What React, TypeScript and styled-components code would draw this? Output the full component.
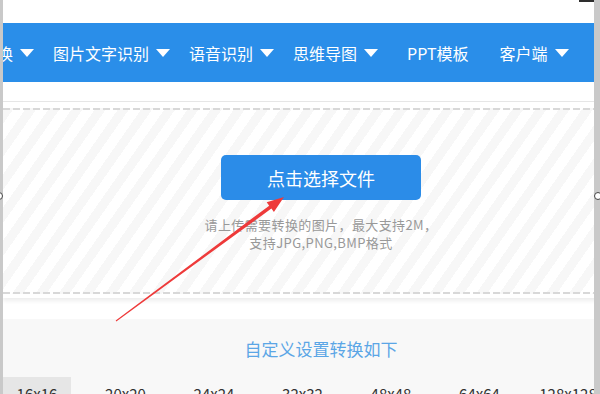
import React from "react";
import styled, { createGlobalStyle } from "styled-components";

const Global = createGlobalStyle`
  html, body { margin: 0; padding: 0; background: #fff; }
  body { width: 600px; height: 394px; overflow: hidden; font-family: "Noto Sans CJK SC", "Noto Sans", sans-serif; }
`;

const Frame = styled.div`
  position: relative;
  display: flex;
  width: 600px;
  height: 394px;
  overflow: hidden;
  background: #fff;
`;

const Strip = styled.div<{ $w: number }>`
  position: relative;
  flex: 0 0 ${(p) => p.$w}px;
  background: #c9c9c9;
`;

const Handle = styled.span<{ $left: number }>`
  position: absolute;
  top: 192px;
  left: ${(p) => p.$left}px;
  width: 6px;
  height: 6px;
  border: 1px solid #444;
  border-radius: 50%;
  background: #fff;
`;

const Main = styled.div`
  flex: 1;
  min-width: 0;
  display: flex;
  flex-direction: column;
  overflow: hidden;
`;

const TopBar = styled.div`
  height: 23px;
  flex: 0 0 23px;
  display: flex;
  justify-content: flex-end;
`;

const TopMark = styled.div`
  width: 15px;
  height: 2px;
  background: #2e2e2e;
`;

const Nav = styled.nav`
  flex: 0 0 59px;
  display: flex;
  align-items: center;
  gap: 19px;
  background: #2a8ee9;
  color: #fff;
  font-size: 16px;
  white-space: nowrap;
  overflow: hidden;
`;

const NavItem = styled.div<{ $shift?: number; $padL?: number; $padR?: number }>`
  display: flex;
  align-items: center;
  gap: 7px;
  flex-shrink: 0;
  margin-left: ${(p) => p.$shift ?? 0}px;
  padding-left: ${(p) => p.$padL ?? 0}px;
  padding-right: ${(p) => p.$padR ?? 0}px;
  line-height: 20px;
`;

const Caret = styled.span`
  width: 0;
  height: 0;
  border-left: 7px solid transparent;
  border-right: 7px solid transparent;
  border-top: 8px solid #fff;
  margin-top: 1px;
`;

const WhiteGap = styled.div<{ $h: number }>`
  flex: 0 0 ${(p) => p.$h}px;
`;

const UploadWrap = styled.div`
  flex: 0 0 auto;
  width: 636px;
  border-top: 1px solid #e6e6e6;
  padding: 6px 0 4px;
  background: #fff;
  box-shadow: 0 3px 4px rgba(0, 0, 0, 0.07);
  position: relative;
`;

const Dropzone = styled.div`
  display: flex;
  flex-direction: column;
  align-items: center;
  padding: 47px 0 42px;
  background:
    repeating-linear-gradient(90deg, #d8d8d8 0 7px, transparent 7px 10px) top / 100% 2px no-repeat,
    repeating-linear-gradient(90deg, #d8d8d8 0 7px, transparent 7px 10px) bottom / 100% 2px no-repeat,
    repeating-linear-gradient(125deg, #f7f7f7 0 9px, #ffffff 9px 19px);
`;

const PickButton = styled.button`
  width: 200px;
  height: 45px;
  border: none;
  border-radius: 5px;
  background: #2b8ce8;
  color: #fff;
  font-family: inherit;
  font-size: 18px;
  padding: 0;
  cursor: pointer;
`;

const Hint = styled.p`
  margin: 16px 0 0;
  color: #999;
  font-size: 13px;
  letter-spacing: 0.4px;
  line-height: 18px;
  text-align: center;
`;

const Settings = styled.div`
  flex: 1;
  background: #f8f8f8;
  display: flex;
  flex-direction: column;
`;

const SettingsTitle = styled.div`
  width: 636px;
  padding-top: 18px;
  text-align: center;
  color: #5ba6e6;
  font-size: 17px;
  line-height: 24px;
`;

const SizeRow = styled.div`
  display: flex;
  gap: 20.5px;
  margin-top: 16px;
  white-space: nowrap;
`;

const SizeCell = styled.div<{ $active?: boolean }>`
  flex: 0 0 68px;
  height: 34px;
  padding-top: 7px;
  box-sizing: border-box;
  text-align: center;
  font-size: 15px;
  line-height: 20px;
  color: #333;
  background: ${(p) => (p.$active ? "#e6e6e6" : "transparent")};
`;

const ArrowLayer = styled.svg`
  position: absolute;
  left: 0;
  top: 0;
  pointer-events: none;
`;

const navItems = [
  { label: "文档转换", caret: true, shift: -54 },
  { label: "图片文字识别", caret: true },
  { label: "语音识别", caret: true },
  { label: "思维导图", caret: true },
  { label: "PPT模板", caret: false, padL: 10, padR: 12 },
  { label: "客户端", caret: true },
];

const sizes = ["16x16", "20x20", "24x24", "32x32", "48x48", "64x64", "128x128"];

export default function App() {
  return (
    <>
      <Global />
      <Frame>
        <Strip $w={3}>
          <Handle $left={-5} />
        </Strip>
        <Main>
          <TopBar>
            <TopMark />
          </TopBar>
          <Nav>
            {navItems.map((n) => (
              <NavItem key={n.label} $shift={n.shift} $padL={n.padL} $padR={n.padR}>
                {n.label}
                {n.caret && <Caret />}
              </NavItem>
            ))}
          </Nav>
          <WhiteGap $h={19} />
          <UploadWrap>
            <Dropzone>
              <PickButton>点击选择文件</PickButton>
              <Hint>
                请上传需要转换的图片，最大支持2M，
                <br />
                支持JPG,PNG,BMP格式
              </Hint>
            </Dropzone>
          </UploadWrap>
          <WhiteGap $h={21} />
          <Settings>
            <SettingsTitle>自定义设置转换如下</SettingsTitle>
            <SizeRow>
              {sizes.map((s, i) => (
                <SizeCell key={s} $active={i === 0}>
                  {s}
                </SizeCell>
              ))}
            </SizeRow>
          </Settings>
        </Main>
        <Strip $w={6}>
          <Handle $left={0} />
        </Strip>
        <ArrowLayer width="600" height="394" viewBox="0 0 600 394">
          <polygon
            points="284,197 273.9,211.9 271.4,208.5 116.3,321.4 115.7,320.6 269.2,205.7 266.7,202.3"
            fill="#ee3a3a"
          />
        </ArrowLayer>
      </Frame>
    </>
  );
}
